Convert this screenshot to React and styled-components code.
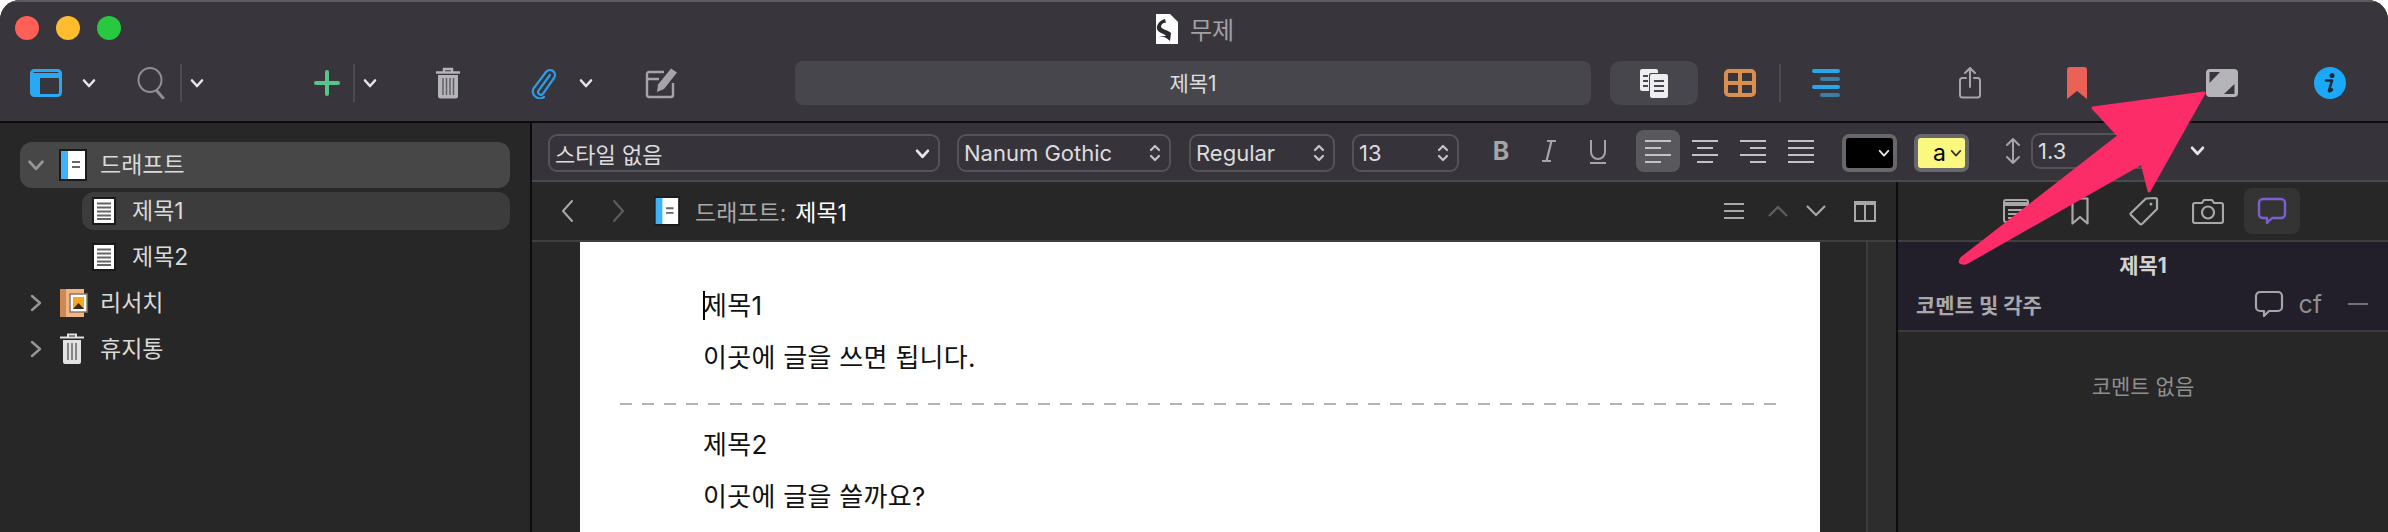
import React from "react";
import styled, { createGlobalStyle } from "styled-components";

const KR = `"Inter", "Noto Sans CJK KR", sans-serif`;

const GlobalStyle = createGlobalStyle`
  html, body {
    margin: 0;
    padding: 0;
    background: #fff;
  }
  body {
    font-family: ${KR};
  }
`;

const Win = styled.div`
  position: relative;
  width: 2388px;
  height: 532px;
  overflow: hidden;
  display: flex;
  flex-direction: column;
  background: #272727;
  border-radius: 20px 20px 0 0;
`;

const Head = styled.header`
  flex: none;
  height: 123px;
  box-sizing: border-box;
  background: #38363c;
  border-top: 2px solid #5c5b60;
  border-bottom: 2px solid #0c0c0c;
  display: flex;
  flex-direction: column;
`;

const TitleRow = styled.div`
  position: relative;
  height: 53px;
  display: flex;
  align-items: center;
  justify-content: center;
  gap: 12px;
  padding-left: 2px;
  color: #a2a1a5;
  font-size: 24px;
`;

const Lights = styled.div`
  position: absolute;
  left: 15px;
  top: 14px;
  display: flex;
  gap: 17px;
`;

const Light = styled.span`
  width: 24px;
  height: 24px;
  border-radius: 50%;
  background: ${(p) => p.$c};
`;

const ToolRow = styled.div`
  display: flex;
  align-items: center;
  height: 44px;
  margin-top: 6px;
  padding-left: 26px;
`;

const Tool = styled.span`
  flex: none;
  width: ${(p) => p.$w || 40}px;
  margin-left: ${(p) => p.$ml || 0}px;
  margin-right: ${(p) => p.$mr || 0}px;
  margin-bottom: ${(p) => p.$mb || 0}px;
  display: flex;
  align-items: center;
  justify-content: center;
`;

const ToolLine = styled.span`
  flex: none;
  width: 2px;
  height: 38px;
  margin-left: ${(p) => p.$ml || 0}px;
  background: #4d4c51;
`;

const TitleField = styled.div`
  flex: none;
  width: 796px;
  height: 44px;
  box-sizing: border-box;
  padding-bottom: 2px;
  margin-left: ${(p) => p.$ml}px;
  border-radius: 8px;
  background: #47464c;
  color: #dcdcde;
  font-size: 21px;
  display: flex;
  align-items: center;
  justify-content: center;
`;

const NoteBtn = styled.span`
  flex: none;
  width: 88px;
  height: 44px;
  margin-left: ${(p) => p.$ml}px;
  border-radius: 10px;
  background: #47464c;
  display: flex;
  align-items: center;
  justify-content: center;
`;

const Body = styled.div`
  flex: 1;
  min-height: 0;
  display: flex;
`;

const Side = styled.aside`
  flex: none;
  width: 532px;
  box-sizing: border-box;
  border-right: 2px solid #0c0c0c;
  padding: 19px 20px 0;
  background: #272727;
`;

const Row = styled.div`
  height: ${(p) => p.$h}px;
  margin-top: ${(p) => p.$mt || 0}px;
  margin-left: ${(p) => p.$ml || 0}px;
  padding-left: ${(p) => p.$pl}px;
  border-radius: 12px;
  background: ${(p) => p.$bg || "transparent"};
  display: flex;
  align-items: center;
  color: #dadada;
  font-size: 23px;
  line-height: 1;
`;

const Arrow = styled.span`
  flex: none;
  width: 24px;
  margin-right: 11px;
  display: flex;
  justify-content: center;
`;

const RowIcon = styled.span`
  flex: none;
  display: flex;
  margin-right: ${(p) => p.$mr}px;
`;

const Main = styled.div`
  flex: 1;
  min-width: 0;
  display: flex;
  flex-direction: column;
`;

const FormatBar = styled.div`
  flex: none;
  height: 59px;
  box-sizing: border-box;
  background: #36343a;
  border-bottom: 2px solid #4a494d;
  padding: 3px 0 0 16px;
  display: flex;
  align-items: center;
  color: #dcdcde;
  font-size: 22px;
`;

const Select = styled.div`
  flex: none;
  width: ${(p) => p.$w}px;
  height: ${(p) => p.$h || 38}px;
  margin-left: ${(p) => p.$ml || 0}px;
  margin-bottom: ${(p) => p.$mb || 0}px;
  box-sizing: border-box;
  border: 2px solid #545358;
  border-radius: 9px;
  padding: 0 8px 0 5px;
  display: flex;
  align-items: center;
  justify-content: space-between;
  white-space: nowrap;
`;

const Fmt = styled.span`
  flex: none;
  width: ${(p) => p.$w || 44}px;
  height: 42px;
  margin-left: ${(p) => p.$ml || 0}px;
  margin-bottom: 4px;
  border-radius: 8px;
  background: ${(p) => (p.$on ? "#59585d" : "transparent")};
  display: flex;
  align-items: center;
  justify-content: center;
  color: #a5a4a8;
`;

const BoldMark = styled.b`
  font-size: 25px;
`;

const Well = styled.div`
  flex: none;
  width: 55px;
  height: 38px;
  margin-left: ${(p) => p.$ml}px;
  box-sizing: border-box;
  border: 4px solid #68676b;
  border-radius: 7px;
  background: ${(p) => p.$c};
  color: #000;
  font-size: 23px;
  display: flex;
  align-items: center;
  justify-content: flex-end;
  gap: 4px;
  padding-right: 3px;
`;

const Panes = styled.div`
  flex: 1;
  min-height: 0;
  display: flex;
`;

const Editor = styled.section`
  flex: none;
  width: 1366px;
  box-sizing: border-box;
  border-right: 2px solid #0c0c0c;
  display: flex;
  flex-direction: column;
`;

const EditorHead = styled.div`
  flex: none;
  height: 60px;
  box-sizing: border-box;
  border-bottom: 2px solid #3f3f3f;
  padding-left: 28px;
  display: flex;
  align-items: center;
  font-size: 23px;
  color: #fff;
`;

const Crumb = styled.span`
  color: #a9a9a9;
  margin: 0 9px 0 15px;
`;

const Push = styled.span`
  flex: 1;
`;

const Scroll = styled.div`
  flex: 1;
  min-height: 0;
  padding-left: 48px;
  display: flex;
`;

const Gutter = styled.div`
  flex: none;
  width: 46px;
`;

const Track = styled.div`
  flex: 1;
  background: #2d2d2d;
  border-left: 2px solid #3c3c3c;
`;

const Page = styled.article`
  flex: none;
  width: 1240px;
  box-sizing: border-box;
  background: #fff;
  padding-top: 38px;
  color: #111;
  font-size: 26px;
  letter-spacing: 0.3px;
`;

const Para = styled.p`
  position: relative;
  margin: 0;
  padding-left: 123px;
  height: 52px;
  line-height: 52px;
`;

const Caret = styled.span`
  position: absolute;
  left: 123px;
  top: 11px;
  width: 2px;
  height: 29px;
  background: #000;
`;

const Dashes = styled.div`
  height: 2px;
  margin: 19px 40px 14px;
  background: repeating-linear-gradient(90deg, #b4b4b4 0 12px, transparent 12px 22px);
`;

const Inspector = styled.aside`
  flex: 1;
  display: flex;
  flex-direction: column;
`;

const TabRow = styled.div`
  flex: none;
  height: 60px;
  box-sizing: border-box;
  border-bottom: 2px solid #3f3f3f;
  padding-left: 90px;
  display: flex;
  align-items: center;
  gap: 8px;
`;

const Tab = styled.span`
  flex: none;
  width: 56px;
  height: 46px;
  border-radius: 8px;
  background: ${(p) => (p.$on ? "#343434" : "transparent")};
  display: flex;
  align-items: center;
  justify-content: center;
`;

const NoteTitle = styled.div`
  height: 44px;
  background: #231f2a;
  color: #d2d2d2;
  font-size: 21px;
  font-weight: 700;
  display: flex;
  align-items: center;
  justify-content: center;
`;

const CommentHead = styled.div`
  height: 46px;
  box-sizing: border-box;
  background: #231f2a;
  border-bottom: 2px solid #3a3a3a;
  padding: 0 20px 8px 18px;
  display: flex;
  align-items: center;
  color: #a9a8ac;
  font-size: 21px;
  font-weight: 700;
`;

const Cf = styled.span`
  margin: 0 26px 0 14px;
  color: #8e8d91;
  font-size: 25px;
  font-weight: 400;
`;

const Empty = styled.div`
  margin-top: 38px;
  text-align: center;
  color: #8f8f8f;
  font-size: 21px;
`;

const Pointer = styled.svg`
  position: absolute;
  left: 0;
  top: 0;
  pointer-events: none;
`;

const Chev = ({ c = "#e6e6e8", s = 14, w = 2.6 }) => (
  <svg width={s} height={s} viewBox="0 0 14 14" fill="none" stroke={c} strokeWidth={w} strokeLinecap="round" strokeLinejoin="round">
    <path d="M2 4.5 7 10l5-5.5" />
  </svg>
);

const Stepper = () => (
  <svg width="12" height="22" viewBox="0 0 12 22" fill="none" stroke="#c4c3c7" strokeWidth="2.2" strokeLinecap="round" strokeLinejoin="round">
    <path d="M2 8l4-4 4 4M2 14l4 4 4-4" />
  </svg>
);

const RowChevron = () => (
  <svg width="14" height="18" viewBox="0 0 14 18" fill="none" stroke="#969696" strokeWidth="2.4" strokeLinecap="round" strokeLinejoin="round">
    <path d="M3 2l8 7-8 7" />
  </svg>
);

const DocIcon = () => (
  <svg width="24" height="28" viewBox="0 0 24 28">
    <rect x="0" y="0" width="24" height="28" fill="#1a1a1a" />
    <rect x="2" y="2" width="20" height="24" fill="#fff" />
    <path d="M5 6.5h14M5 10.5h14M5 14.5h14M5 18.5h14M5 22h14" stroke="#666" strokeWidth="2" />
  </svg>
);

const BinderIcon = ({ w = 28, h = 32 }) => (
  <svg width={w} height={h} viewBox="0 0 28 32">
    <rect x="0" y="0" width="28" height="32" fill="#1b1b1b" />
    <rect x="2" y="2" width="24" height="28" fill="#fff" />
    <rect x="2" y="2" width="7" height="28" fill="#3eb3fb" />
    <path d="M13 13h8M13 18h8" stroke="#666" strokeWidth="2" />
  </svg>
);

const ResearchIcon = () => (
  <svg width="30" height="30" viewBox="0 0 30 30">
    <rect x="1" y="1" width="24" height="28" fill="#f0b486" />
    <rect x="1" y="1" width="6" height="28" fill="#cf8852" />
    <rect x="11" y="6" width="17" height="18" fill="#fff" stroke="#8a7566" strokeWidth="1.5" />
    <rect x="14" y="9" width="11" height="12" fill="#f5a623" />
    <path d="M14 21l5.5-6 5.5 6z" fill="#3a2a20" />
  </svg>
);

const BinTrash = () => (
  <svg width="26" height="32" viewBox="0 0 26 32">
    <path d="M1 4.5h24M9 4V1.5h8V4" stroke="#e2e2e2" strokeWidth="2" fill="none" />
    <path d="M4 7h18v22a2 2 0 0 1-2 2H6a2 2 0 0 1-2-2z" fill="#e2e2e2" />
    <path d="M9 10v17M13 10v17M17 10v17" stroke="#6e6e6e" strokeWidth="1.6" />
  </svg>
);

const Bubble = ({ c = "#a5a4a8", w = 2.2 }) => (
  <svg width="30" height="28" viewBox="0 0 30 28" fill="none" stroke={c} strokeWidth={w} strokeLinejoin="round">
    <path d="M6 2h18a4 4 0 0 1 4 4v11a4 4 0 0 1-4 4H15l-5 5v-5H6a4 4 0 0 1-4-4V6a4 4 0 0 1 4-4z" />
  </svg>
);

function Toolbar() {
  return (
    <ToolRow>
      <Tool>
        <svg width="32" height="28" viewBox="0 0 32 28">
          <rect x="1.5" y="1.5" width="29" height="25" rx="3" fill="none" stroke="#2aa9f3" strokeWidth="3" />
          <path d="M2 4h28v5H2zM2 9h8v17H2z" fill="#2aa9f3" />
        </svg>
      </Tool>
      <Tool $w={20} $ml={13}><Chev /></Tool>
      <Tool $ml={33}>
        <svg width="30" height="32" viewBox="0 0 30 32" fill="none" stroke="#8f8e92" strokeWidth="2">
          <ellipse cx="13" cy="13" rx="11.5" ry="12" />
          <path d="M20 24l6 7" strokeWidth="3" strokeLinecap="round" />
        </svg>
      </Tool>
      <ToolLine $ml={8} />
      <Tool $w={20} $ml={5}><Chev /></Tool>
      <Tool $ml={100}>
        <svg width="26" height="26" viewBox="0 0 26 26">
          <path d="M13 2v22M2 13h22" stroke="#58c48a" strokeWidth="4" strokeLinecap="round" />
        </svg>
      </Tool>
      <ToolLine $ml={6} />
      <Tool $w={20} $ml={5}><Chev /></Tool>
      <Tool $ml={48}>
        <svg width="26" height="32" viewBox="0 0 26 32">
          <path d="M1 5.5h24M9 5V2h8v3" stroke="#b5b4b9" strokeWidth="2.4" fill="none" />
          <path d="M3 8h20v21a2.5 2.5 0 0 1-2.5 2.5h-15A2.5 2.5 0 0 1 3 29z" fill="#b5b4b9" />
          <path d="M8 11v17M11.5 11v17M15 11v17M18.5 11v17" stroke="#5d5c61" strokeWidth="1.4" />
        </svg>
      </Tool>
      <Tool $ml={55}>
        <svg width="28" height="32" viewBox="0 0 28 32" fill="none" stroke="#2d9ee6" strokeWidth="2.2" strokeLinecap="round">
          <path d="M21 8 9.5 23.5a2.8 2.8 0 0 0 4.5 3.3L25 11a5 5 0 0 0-8-6L4.5 21.5a7 7 0 0 0 10.5 8.5" />
        </svg>
      </Tool>
      <Tool $w={20} $ml={13}><Chev /></Tool>
      <Tool $ml={46}>
        <svg width="34" height="32" viewBox="0 0 34 32" fill="none">
          <path d="M28 16v12a2 2 0 0 1-2 2H4a2 2 0 0 1-2-2V7a2 2 0 0 1 2-2h15M2 12h12" stroke="#a5a4a8" strokeWidth="2.4" />
          <path d="M26 1.5l6 4L19 22l-7 3 1-7.5z" fill="#a5a4a8" />
        </svg>
      </Tool>
      <TitleField $ml={113}>제목1</TitleField>
      <NoteBtn $ml={19}>
        <svg width="28" height="29" viewBox="0 0 28 29">
          <path d="M2 0h14a2 2 0 0 1 2 2v20H2a2 2 0 0 1-2-2V2a2 2 0 0 1 2-2z" fill="#eeeef0" />
          <path d="M3 7h5M3 12h5M3 17h5" stroke="#47464c" strokeWidth="2" />
          <rect x="9" y="4" width="19" height="25" rx="2" fill="#47464c" />
          <rect x="10" y="5" width="18" height="24" rx="2" fill="#eeeef0" />
          <path d="M14 12h10M14 17h10M14 22h10" stroke="#47464c" strokeWidth="2.2" />
        </svg>
      </NoteBtn>
      <Tool $ml={22}>
        <svg width="32" height="28" viewBox="0 0 32 28" fill="none" stroke="#d98f4e" strokeWidth="4">
          <rect x="2" y="2" width="28" height="24" rx="3" />
          <path d="M16 2v24M2 14h28" />
        </svg>
      </Tool>
      <ToolLine $ml={19} />
      <Tool $ml={25}>
        <svg width="30" height="28" viewBox="0 0 30 28" strokeWidth="4" strokeLinecap="round">
          <path d="M3 2h24M3 18h24" stroke="#25a7ec" />
          <path d="M11 10h16M11 26h16" stroke="#3d7ea6" />
        </svg>
      </Tool>
      <Tool $ml={104}>
        <svg width="24" height="32" viewBox="0 0 24 32" fill="none" stroke="#a5a4a8" strokeWidth="2" strokeLinecap="round" strokeLinejoin="round">
          <path d="M8 11H4a2.5 2.5 0 0 0-2 2.5V28a2.5 2.5 0 0 0 2.5 2.5h15A2.5 2.5 0 0 0 22 28V13.5A2.5 2.5 0 0 0 20 11h-4M12 20V1.5M7 6l5-5 5 5" />
        </svg>
      </Tool>
      <Tool $ml={67}>
        <svg width="20" height="32" viewBox="0 0 20 32">
          <path d="M0 3a3 3 0 0 1 3-3h14a3 3 0 0 1 3 3v29l-10-8-10 8z" fill="#ea6158" />
        </svg>
      </Tool>
      <Tool $ml={105}>
        <svg width="32" height="28" viewBox="0 0 32 28">
          <rect x="0" y="0" width="32" height="28" rx="4" fill="#b5b4b9" />
          <path d="M3.5 3H14L3.5 14zM28.5 25H18l10.5-10z" fill="#38363c" />
        </svg>
      </Tool>
      <Tool $ml={68}>
        <svg width="32" height="32" viewBox="0 0 32 32">
          <circle cx="16" cy="16" r="16" fill="#1ba8f8" />
          <circle cx="18" cy="8.5" r="2.5" fill="#1b2733" />
          <path d="M12 13.5h6l-3 10c-.3 1 .8 1.2 3-1" stroke="#1b2733" strokeWidth="2.6" fill="none" strokeLinecap="round" strokeLinejoin="round" />
        </svg>
      </Tool>
    </ToolRow>
  );
}

function Binder() {
  return (
    <Side>
      <Row $h={46} $pl={4} $bg="#474747">
        <Arrow><Chev c="#969696" s={18} w={2.2} /></Arrow>
        <RowIcon $mr={13}><BinderIcon /></RowIcon>
        드래프트
      </Row>
      <Row $h={38} $mt={4} $ml={62} $pl={10} $bg="#3c3c3c">
        <RowIcon $mr={16}><DocIcon /></RowIcon>
        제목1
      </Row>
      <Row $h={38} $mt={8} $ml={62} $pl={10}>
        <RowIcon $mr={16}><DocIcon /></RowIcon>
        제목2
      </Row>
      <Row $h={46} $mt={4} $pl={4}>
        <Arrow><RowChevron /></Arrow>
        <RowIcon $mr={11}><ResearchIcon /></RowIcon>
        리서치
      </Row>
      <Row $h={46} $pl={4}>
        <Arrow><RowChevron /></Arrow>
        <RowIcon $mr={15}><BinTrash /></RowIcon>
        휴지통
      </Row>
    </Side>
  );
}

const Align = ({ d }) => (
  <svg width="26" height="26" viewBox="0 0 26 26" fill="none" stroke="#c2c1c5" strokeWidth="2">
    <path d={d} />
  </svg>
);

function Format() {
  return (
    <FormatBar>
      <Select $w={392}>스타일 없음<Chev s={15} /></Select>
      <Select $w={214} $ml={17}>Nanum Gothic<Stepper /></Select>
      <Select $w={146} $ml={18}>Regular<Stepper /></Select>
      <Select $w={107} $ml={17}>13<Stepper /></Select>
      <Fmt $ml={20}><BoldMark>B</BoldMark></Fmt>
      <Fmt $ml={4}>
        <svg width="16" height="24" viewBox="0 0 16 24" fill="none" stroke="#a5a4a8" strokeWidth="2.2">
          <path d="M6 2h9M1 22h9M10.5 2 5.5 22" />
        </svg>
      </Fmt>
      <Fmt $ml={5}>
        <svg width="18" height="26" viewBox="0 0 18 26" fill="none" stroke="#a5a4a8" strokeWidth="2">
          <path d="M2 2v12a7 7 0 0 0 14 0V2M1 25h16" />
        </svg>
      </Fmt>
      <Fmt $on $ml={16}><Align d="M0 3h26M0 10h16M0 17h26M0 24h16" /></Fmt>
      <Fmt $ml={3}><Align d="M0 3h26M5 10h16M0 17h26M5 24h16" /></Fmt>
      <Fmt $ml={4}><Align d="M0 3h26M10 10h16M0 17h26M10 24h16" /></Fmt>
      <Fmt $ml={4}><Align d="M0 3h26M0 10h26M0 17h26M0 24h26" /></Fmt>
      <Well $ml={19} $c="#000"><Chev s={12} w={2.2} /></Well>
      <Well $ml={17} $c="#fbf87f">a<Chev c="#333" s={12} w={2} /></Well>
      <Fmt $ml={22}>
        <svg width="18" height="28" viewBox="0 0 18 28" fill="none" stroke="#a5a4a8" strokeWidth="2" strokeLinecap="round" strokeLinejoin="round">
          <path d="M9 2v24M3 8l6-6 6 6M3 20l6 6 6-6" />
        </svg>
      </Fmt>
      <Select $w={130} $h={36} $ml={-4} $mb={5}>1.3</Select>
      <Tool $w={20} $ml={26} $mb={5}><Chev s={15} /></Tool>
    </FormatBar>
  );
}

function EditorPane() {
  return (
    <Editor>
      <EditorHead>
        <svg width="14" height="24" viewBox="0 0 14 24" fill="none" stroke="#a8a8a8" strokeWidth="2" strokeLinecap="round" strokeLinejoin="round"><path d="M12 2 3 12l9 10" /></svg>
        <Tool $w={14} $ml={38}>
          <svg width="14" height="24" viewBox="0 0 14 24" fill="none" stroke="#5f5f5f" strokeWidth="2" strokeLinecap="round" strokeLinejoin="round"><path d="M2 2l9 10-9 10" /></svg>
        </Tool>
        <Tool $w={26} $ml={28}><BinderIcon w={26} h={30} /></Tool>
        <Crumb>드래프트:</Crumb>
        제목1
        <Push />
        <Tool $w={24}>
          <svg width="22" height="18" viewBox="0 0 22 18" stroke="#a8a8a8" strokeWidth="2"><path d="M1 2h20M1 9h20M1 16h20" /></svg>
        </Tool>
        <Tool $w={24} $ml={20}>
          <svg width="22" height="14" viewBox="0 0 22 14" fill="none" stroke="#5f5f5f" strokeWidth="2.2"><path d="M2 12l9-9 9 9" /></svg>
        </Tool>
        <Tool $w={24} $ml={14}>
          <svg width="22" height="14" viewBox="0 0 22 14" fill="none" stroke="#a8a8a8" strokeWidth="2.2"><path d="M2 2l9 9 9-9" /></svg>
        </Tool>
        <Tool $w={24} $ml={25} $mr={19}>
          <svg width="22" height="22" viewBox="0 0 22 22" fill="none" stroke="#a8a8a8" strokeWidth="2"><path d="M1 2h20v19H1zM11 2v19M1 4h20" /></svg>
        </Tool>
      </EditorHead>
      <Scroll>
        <Page>
          <Para><Caret />제목1</Para>
          <Para>이곳에 글을 쓰면 됩니다.</Para>
          <Dashes />
          <Para>제목2</Para>
          <Para>이곳에 글을 쓸까요?</Para>
        </Page>
        <Gutter />
        <Track />
      </Scroll>
    </Editor>
  );
}

function InspectorPane() {
  return (
    <Inspector>
      <TabRow>
        <Tab>
          <svg width="26" height="24" viewBox="0 0 26 24" fill="none" stroke="#a8a8a8" strokeWidth="2"><rect x="1" y="1" width="24" height="22" rx="2" /><path d="M1 5h24" strokeWidth="4" /><path d="M5 11h16M5 15h16M5 19h10" /></svg>
        </Tab>
        <Tab>
          <svg width="18" height="28" viewBox="0 0 18 28" fill="none" stroke="#a8a8a8" strokeWidth="2.2" strokeLinejoin="round"><path d="M1.5 1.5h15v25L9 20l-7.5 6.5z" /></svg>
        </Tab>
        <Tab>
          <svg width="30" height="30" viewBox="0 0 30 30" fill="none" stroke="#a8a8a8" strokeWidth="2.2" strokeLinejoin="round"><path d="M17 2.5 26.5 2a1.5 1.5 0 0 1 1.5 1.5V13L13 28a1.5 1.5 0 0 1-2 0L2 19a1.5 1.5 0 0 1 0-2z" /><circle cx="22" cy="8" r="1.5" fill="#a8a8a8" stroke="none" /></svg>
        </Tab>
        <Tab>
          <svg width="32" height="26" viewBox="0 0 32 26" fill="none" stroke="#a8a8a8" strokeWidth="2.2" strokeLinejoin="round"><path d="M3 5h7l2-3h8l2 3h7a2 2 0 0 1 2 2v16a2 2 0 0 1-2 2H3a2 2 0 0 1-2-2V7a2 2 0 0 1 2-2z" /><circle cx="16" cy="14.5" r="6" /></svg>
        </Tab>
        <Tab $on><Bubble c="#7d5fd0" w={2.4} /></Tab>
      </TabRow>
      <NoteTitle>제목1</NoteTitle>
      <CommentHead>
        코멘트 및 각주
        <Push />
        <Bubble />
        <Cf>cf</Cf>
        <svg width="20" height="4" viewBox="0 0 20 4"><path d="M0 2h20" stroke="#737276" strokeWidth="2" /></svg>
      </CommentHead>
      <Empty>코멘트 없음</Empty>
    </Inspector>
  );
}

export default function App() {
  return (
    <>
      <GlobalStyle />
      <Win>
        <Head>
          <TitleRow>
            <Lights>
              <Light $c="#fe5f57" />
              <Light $c="#febc2e" />
              <Light $c="#28c840" />
            </Lights>
            <svg width="22" height="30" viewBox="0 0 22 30">
              <path d="M0 0h14l8 8v22H0z" fill="#fff" />
              <path d="M2 24c4-3 9 0 12 3l1-8c-3-3-8-3-10-6 0-3 3-5 5-4l-1-4C5 6 0 10 1 15c1 4 7 4 9 7-2 0-6 0-8 2z" fill="#2b2a2e" />
            </svg>
            무제
          </TitleRow>
          <Toolbar />
        </Head>
        <Body>
          <Binder />
          <Main>
            <Format />
            <Panes>
              <EditorPane />
              <InspectorPane />
            </Panes>
          </Main>
        </Body>
        {/* pink annotation arrow lying over the window */}
        <Pointer width="2388" height="532" viewBox="0 0 2388 532">
          <path d="M2204 93 2093 108 2119 136 1962 258Q1957 264 1966 263L2142 163 2149 191Z" fill="#fb2c68" stroke="#fb2c68" strokeWidth="3" strokeLinejoin="round" />
        </Pointer>
      </Win>
    </>
  );
}
